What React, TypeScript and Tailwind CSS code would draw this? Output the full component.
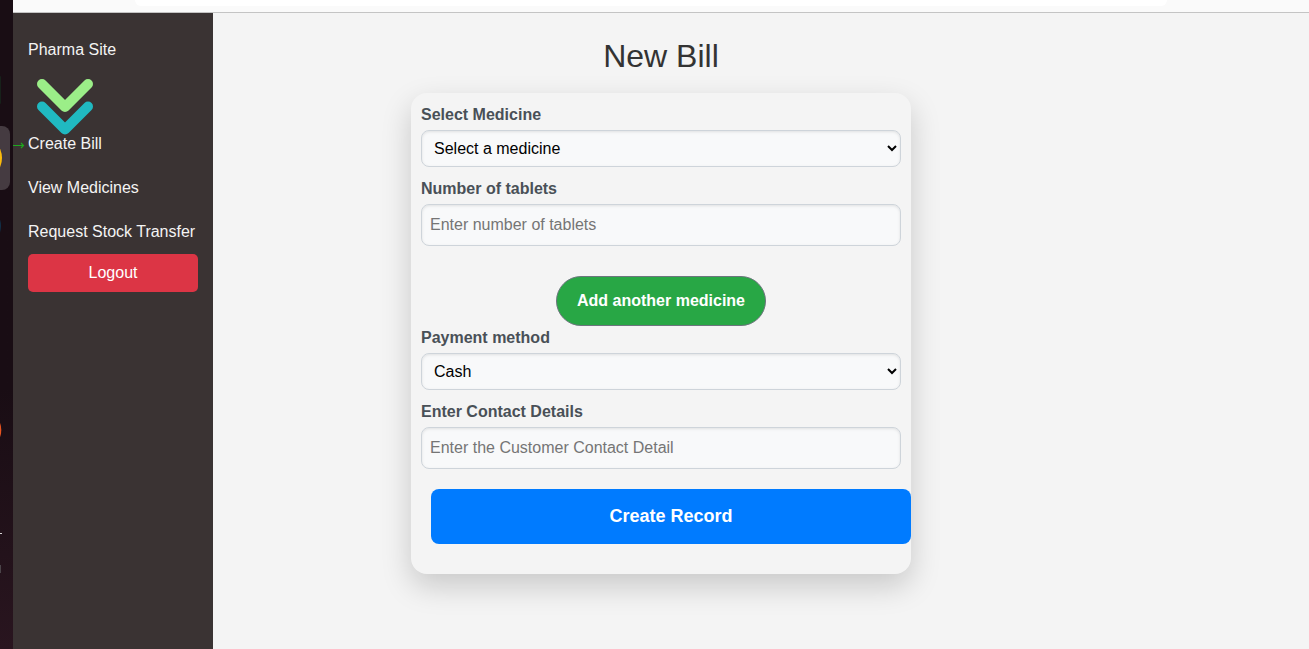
import React, { useId } from 'react';

const controlStyle =
  'w-full rounded-lg border border-[#ced4da] bg-[#f8f9fa] text-base leading-6 shadow-[inset_0_1px_3px_rgba(0,0,0,0.1)]';

function Field({ label, children }: { label: string; children: (id: string) => React.ReactNode }) {
  const id = useId();
  return (
    <div>
      <label htmlFor={id} className="block pb-[3px] text-base leading-6 font-bold text-[#495057]">
        {label}
      </label>
      {children(id)}
    </div>
  );
}

function SelectField({ label, options }: { label: string; options: string[] }) {
  return (
    <Field label={label}>
      {(id) => (
        <select id={id} className={controlStyle + ' block h-[37px] px-2 text-black'}>
          {options.map((option) => (
            <option key={option}>{option}</option>
          ))}
        </select>
      )}
    </Field>
  );
}

function TextField({ label, placeholder }: { label: string; placeholder: string }) {
  return (
    <Field label={label}>
      {(id) => (
        <input
          id={id}
          type="text"
          placeholder={placeholder}
          className={controlStyle + ' block h-[42px] px-2 text-black placeholder:text-[#757575]'}
        />
      )}
    </Field>
  );
}

function Dock() {
  return (
    <div className="w-[13px] shrink-0 overflow-hidden bg-linear-to-b from-[#190d14] from-60% to-[#29151f]">
      <svg width="13" height="600" viewBox="0 0 13 600" aria-hidden="true">
        <rect x="-20" y="76" width="21" height="28" rx="1" fill="#17211a" />
        <rect x="-54" y="126" width="64" height="64" rx="8" fill="#453b41" />
        <circle cx="-20" cy="158" r="22" fill="#fdbc0b" />
        <circle cx="-20" cy="226" r="21" fill="#123048" />
        <circle cx="-20" cy="430" r="21.3" fill="#e95420" />
        <rect x="0" y="533" width="2" height="1" fill="#d8d4d6" />
        <rect x="-8" y="565" width="9" height="8" fill="#4b4449" />
      </svg>
    </div>
  );
}

function Logo() {
  return (
    <svg className="mt-4 ml-[9px] block" width="56" height="57" viewBox="0 0 56 57" aria-hidden="true">
      <g fill="none" strokeWidth="10" strokeLinecap="round" strokeLinejoin="round">
        <path d="M5 28.5 28 51.5 51 28.5" stroke="#20b9c1" />
        <path d="M5 6 28 29 51 6" stroke="#9bee88" />
      </g>
    </svg>
  );
}

function Sidebar() {
  return (
    <aside className="w-[200px] shrink-0 bg-[#3a3333] px-[15px] pt-[25px] text-base leading-6 text-[#f4f4f4]">
      <a href="#home" className="block">
        Pharma Site
      </a>
      <Logo />
      <nav className="-mt-[3px] flex flex-col gap-5 whitespace-nowrap">
        <a href="#create" className="relative">
          <svg
            className="absolute top-[9px] -left-[15px]"
            width="12"
            height="9"
            viewBox="0 0 12 9"
            aria-hidden="true"
          >
            <path d="M0 4.5H10.5M8 2 10.5 4.5 8 7" fill="none" stroke="#1fa81f" strokeWidth="1.2" />
          </svg>
          Create Bill
        </a>
        <a href="#medicines">View Medicines</a>
        <a href="#transfer">Request Stock Transfer</a>
      </nav>
      <button type="button" className="mt-[10px] h-[38px] w-full rounded-[5px] bg-[#dc3545] text-white">
        Logout
      </button>
    </aside>
  );
}

export default function App() {
  return (
    <div className="flex min-h-screen bg-[#f4f4f4] font-['Liberation_Sans',Arial,sans-serif]">
      <Dock />
      <div className="flex min-w-0 grow flex-col">
        <div className="h-[13px] shrink-0 border-b border-[#c4c4c4] bg-[#fafafa] pr-[142px] pl-[122px]">
          <div className="h-[6px] rounded-b-[10px] bg-white" />
        </div>
        <div className="flex grow">
          <Sidebar />
          <main className="flex grow flex-col items-center pt-[23px] pr-[200px]">
            <h1 className="text-[32px] leading-10 text-[#333]">New Bill</h1>
            <form
              className="mt-[17px] mb-8 flex w-full max-w-[500px] flex-col rounded-2xl px-[10px] pt-[10px] pb-[30px] shadow-[0_12px_30px_rgba(0,0,0,0.18)]"
              onSubmit={(event) => event.preventDefault()}
            >
              <div className="flex flex-col gap-[10px]">
                <SelectField label="Select Medicine" options={['Select a medicine']} />
                <TextField label="Number of tablets" placeholder="Enter number of tablets" />
              </div>
              <button
                type="button"
                className="mt-[30px] h-[50px] self-center rounded-full border border-[#6c757d] bg-[#28a745] px-5 text-base font-bold text-white"
              >
                Add another medicine
              </button>
              <div className="flex flex-col gap-[10px]">
                <SelectField label="Payment method" options={['Cash', 'Card']} />
                <TextField label="Enter Contact Details" placeholder="Enter the Customer Contact Detail" />
              </div>
              <button
                type="submit"
                className="mt-5 -mr-[10px] ml-[10px] h-[55px] rounded-lg bg-[#007bff] pb-px text-lg font-bold text-white"
              >
                Create Record
              </button>
            </form>
          </main>
        </div>
      </div>
    </div>
  );
}
